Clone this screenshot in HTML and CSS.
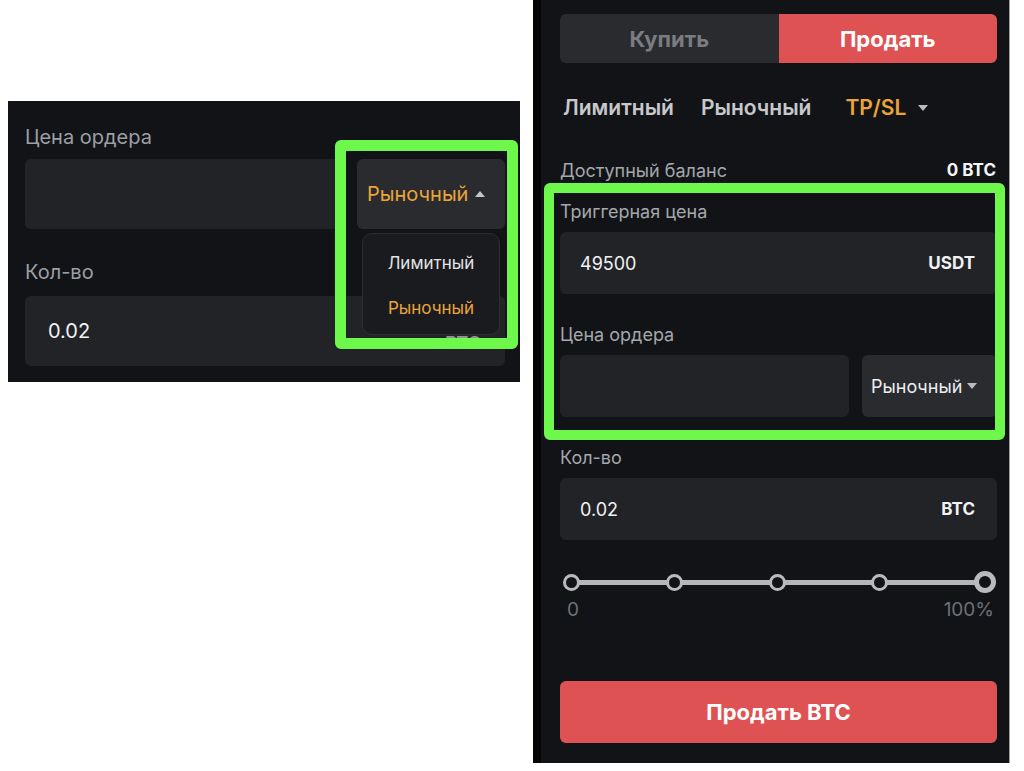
FILE: index.html
```html
<!DOCTYPE html>
<html lang="ru">
<head>
<meta charset="utf-8">
<title>Order form</title>
<link rel="stylesheet" href="styles.css">
</head>
<body>
<div class="canvas">
  <section class="shot shot-left">
    <div class="field-label">Цена ордера</div>
    <div class="row">
      <div class="input grow"></div>
      <div class="select select-open"><span>Рыночный</span><i class="caret up"></i></div>
    </div>
    <div class="field-label second">Кол-во</div>
    <div class="input qty"><span class="value">0.02</span><span class="unit">BTC</span></div>
    <div class="menu">
      <div class="menu-item">Лимитный</div>
      <div class="menu-item active">Рыночный</div>
    </div>
    <div class="highlight hl-left"></div>
  </section>

  <section class="shot shot-right">
    <div class="toggle">
      <div class="toggle-btn buy">Купить</div>
      <div class="toggle-btn sell">Продать</div>
    </div>
    <div class="tabs">
      <span class="tab">Лимитный</span>
      <span class="tab">Рыночный</span>
      <span class="tab tab-active">TP/SL <i class="caret down"></i></span>
    </div>
    <div class="balance"><span>Доступный баланс</span><b>0 BTC</b></div>
    <div class="r-label first">Триггерная цена</div>
    <div class="r-input"><span class="value">49500</span><span class="unit">USDT</span></div>
    <div class="r-label">Цена ордера</div>
    <div class="r-row">
      <div class="r-input grow"></div>
      <div class="r-select"><span>Рыночный</span><i class="caret down"></i></div>
    </div>
    <div class="r-label">Кол-во</div>
    <div class="r-input"><span class="value">0.02</span><span class="unit">BTC</span></div>
    <div class="slider">
      <span class="dot"></span><span class="dot"></span><span class="dot"></span><span class="dot"></span><span class="dot dot-end"></span>
    </div>
    <div class="slider-labels"><span>0</span><span>100%</span></div>
    <button class="submit">Продать BTC</button>
    <div class="highlight hl-right"></div>
  </section>
</div>
</body>
</html>
```

FILE: styles.css
```css
* { box-sizing: border-box; }
html, body { margin: 0; padding: 0; background: #ffffff; }
body { font-family: Inter, "Noto Sans", "DejaVu Sans", sans-serif; }

.canvas {
  display: flex;
  align-items: flex-start;
  padding-left: 8px;
  width: 1024px;
  height: 771px;
}

.shot {
  position: relative;
  background: #121316;
  color: #e6e7e9;
}

/* ---------- left shot ---------- */
.shot-left {
  width: 512px;
  height: 281px;
  margin-top: 101px;
  padding: 24px 15px 0 17px;
}
.field-label {
  font-size: 20px;
  line-height: 24px;
  color: #9c9fa5;
  height: 24px;
}
.field-label.second { margin-top: 31px; }
.row {
  display: flex;
  gap: 12px;
  margin-top: 10px;
}
.input {
  background: #222327;
  border-radius: 6px;
  height: 70px;
}
.grow { flex: 1; }
.select {
  width: 148px;
  height: 70px;
  background: #2a2b2f;
  border-radius: 6px;
  display: flex;
  align-items: center;
  padding-left: 10px;
  gap: 7px;
  font-size: 20px;
  color: #eaa53a;
}
.qty {
  margin-top: 12px;
  display: flex;
  align-items: center;
  justify-content: space-between;
  padding: 0 24px 0 23px;
  font-size: 20px;
  color: #f1f2f3;
}
.qty .unit { font-weight: 700; font-size: 18px; color: #8f9196; padding-top: 22px; }

.caret {
  display: inline-block;
  width: 0;
  height: 0;
  border-left: 5px solid transparent;
  border-right: 5px solid transparent;
}
.caret.up { border-bottom: 6px solid #c4c6ca; }
.caret.down { border-top: 6px solid #b9bbbf; }

.menu {
  position: absolute;
  left: 354px;
  top: 132px;
  width: 138px;
  height: 102px;
  background: #1a1b1f;
  border: 1px solid #2d2e33;
  border-radius: 10px;
  display: flex;
  flex-direction: column;
  justify-content: center;
  gap: 21px;
  align-items: center;
  font-size: 17px;
  padding-top: 2px;
}
.menu-item { line-height: 24px; color: #e2e3e5; }
.menu-item.active { color: #eaa53a; }

.highlight {
  position: absolute;
  border: 11px solid #6ff84c;
  border-radius: 6px;
  pointer-events: none;
}
.hl-left { left: 327px; top: 39px; width: 183px; height: 209px; }

/* ---------- right shot ---------- */
.shot-right {
  width: 477px;
  height: 763px;
  margin-left: 13px;
  border-left: 8px solid #040405;
  border-right: 1px solid #9b9c9e;
  padding: 14px 12px 0 19px;
}
.toggle {
  display: flex;
  height: 49px;
  border-radius: 6px;
  overflow: hidden;
}
.toggle-btn {
  flex: 1;
  display: flex;
  align-items: center;
  justify-content: center;
  font-size: 22px;
  font-weight: 700;
}
.buy { background: #2a2b2f; color: #7a7c81; }
.sell { background: #df5253; color: #ffffff; }

.tabs {
  margin-top: 33px;
  height: 24px;
  display: flex;
  align-items: center;
  padding-left: 3px;
  gap: 27px;
  font-size: 21px;
  font-weight: 600;
  line-height: 24px;
  color: #c6c8cc;
}
.tab-active {
  color: #eaa53a;
  margin-left: 7px;
  display: flex;
  align-items: center;
  gap: 12px;
}
.tab-active .caret { border-top-color: #b9bbbf; }

.balance {
  margin-top: 40px;
  height: 20px;
  display: flex;
  justify-content: space-between;
  align-items: center;
  font-size: 18px;
  color: #a4a7ac;
}
.balance b { font-size: 17px; color: #f4f5f6; font-weight: 700; padding-right: 1px; }

.r-label {
  margin-top: 31px;
  height: 20px;
  line-height: 20px;
  font-size: 18px;
  color: #a4a7ac;
}
.r-label.first { margin-top: 22px; }
.r-input {
  margin-top: 10px;
  height: 62px;
  background: #222327;
  border-radius: 6px;
  display: flex;
  align-items: center;
  justify-content: space-between;
  padding: 0 22px 0 20px;
  font-size: 18px;
  color: #f1f2f3;
}
.r-input .unit { font-size: 17px; font-weight: 700; }
.r-row {
  display: flex;
  gap: 13px;
  margin-top: 10px;
}
.r-row .r-input { margin-top: 0; }
.r-select {
  width: 135px;
  height: 62px;
  background: #2a2b2f;
  border-radius: 6px;
  display: flex;
  align-items: center;
  padding-left: 9px;
  gap: 5px;
  font-size: 18px;
  color: #eceef0;
}

.slider {
  margin-top: 31px;
  height: 22px;
  display: flex;
  align-items: center;
  justify-content: space-between;
  padding: 0 1px 0 3px;
  background: linear-gradient(#b4b6ba, #b4b6ba) center / calc(100% - 24px) 5px no-repeat;
}
.dot {
  width: 17px;
  height: 17px;
  border-radius: 50%;
  border: 3px solid #b8babe;
  background: #121316;
}
.dot-end { width: 22px; height: 22px; border-width: 5px; }

.slider-labels {
  margin-top: 8px;
  height: 18px;
  display: flex;
  justify-content: space-between;
  padding: 0 3px 0 7px;
  font-size: 19px;
  line-height: 18px;
  color: #6d7176;
}

.submit {
  display: block;
  width: 100%;
  margin-top: 62px;
  height: 62px;
  border: none;
  border-radius: 6px;
  background: #df5253;
  color: #ffffff;
  font-family: inherit;
  font-size: 22px;
  font-weight: 700;
}

.hl-right { left: 3px; top: 183px; width: 461px; height: 257px; border-width: 10px; }
```
